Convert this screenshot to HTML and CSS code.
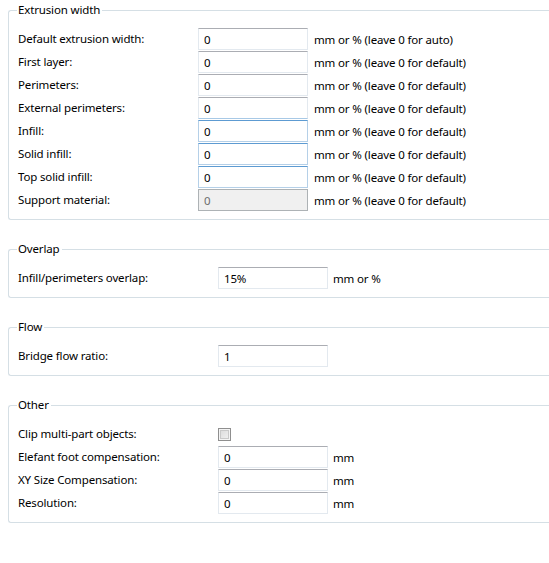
FILE: index.html
```html
<!DOCTYPE html>
<html>
<head>
<meta charset="utf-8">
<link rel="stylesheet" href="styles.css">
</head>
<body>
<div class="page">
  <fieldset class="group g1">
    <legend>Extrusion width</legend>
    <div class="row"><span class="label">Default extrusion width:</span><input class="field" value="0"><span class="unit">mm or % (leave 0 for auto)</span></div>
    <div class="row"><span class="label">First layer:</span><input class="field" value="0"><span class="unit">mm or % (leave 0 for default)</span></div>
    <div class="row"><span class="label">Perimeters:</span><input class="field" value="0"><span class="unit">mm or % (leave 0 for default)</span></div>
    <div class="row"><span class="label">External perimeters:</span><input class="field half" value="0"><span class="unit">mm or % (leave 0 for default)</span></div>
    <div class="row"><span class="label">Infill:</span><input class="field hot" value="0"><span class="unit">mm or % (leave 0 for default)</span></div>
    <div class="row"><span class="label">Solid infill:</span><input class="field hot" value="0"><span class="unit">mm or % (leave 0 for default)</span></div>
    <div class="row"><span class="label">Top solid infill:</span><input class="field hot" value="0"><span class="unit">mm or % (leave 0 for default)</span></div>
    <div class="row"><span class="label">Support material:</span><input class="field disabled" value="0" disabled><span class="unit">mm or % (leave 0 for default)</span></div>
  </fieldset>

  <fieldset class="group g2">
    <legend>Overlap</legend>
    <div class="row"><span class="label">Infill/perimeters overlap:</span><input class="field" value="15%"><span class="unit">mm or %</span></div>
  </fieldset>

  <fieldset class="group g2">
    <legend>Flow</legend>
    <div class="row"><span class="label">Bridge flow ratio:</span><input class="field" value="1"></div>
  </fieldset>

  <fieldset class="group g2">
    <legend>Other</legend>
    <div class="row"><span class="label">Clip multi-part objects:</span><span class="check"></span></div>
    <div class="row"><span class="label">Elefant foot compensation:</span><input class="field" value="0"><span class="unit">mm</span></div>
    <div class="row"><span class="label">XY Size Compensation:</span><input class="field" value="0"><span class="unit">mm</span></div>
    <div class="row"><span class="label">Resolution:</span><input class="field" value="0"><span class="unit">mm</span></div>
  </fieldset>
</div>
</body>
</html>
```

FILE: styles.css
```css
html, body {
  margin: 0;
  padding: 0;
  background: #ffffff;
  overflow: hidden;
}

body {
  font-family: "Noto Sans", "Open Sans", sans-serif;
  font-size: 11.5px;
  letter-spacing: -0.15px;
  color: #000000;
}

.page {
  display: flex;
  flex-direction: column;
  gap: 21px;
  padding: 2px 0 0 8px;
}

.group {
  margin: 0;
  padding: 10px 0 8px 9px;
  border: 1px solid #d5dfe5;
  border-right: 0;
  border-radius: 3px 0 0 3px;
  display: flex;
  flex-direction: column;
  gap: 1px;
  min-inline-size: 0;
}

.group legend {
  padding: 0 2px 0 1px;
  margin-left: -1px;
  line-height: 16px;
  height: 16px;
  color: #000;
}

.row {
  display: flex;
  align-items: center;
  height: 22px;
}

.label {
  flex: none;
  line-height: 16px;
}

.g1 .label { width: 180px; }
.g2 .label { width: 200px; }

.field {
  flex: none;
  box-sizing: border-box;
  width: 110px;
  height: 22px;
  margin: 0;
  padding: 0 0 0 5px;
  font: inherit;
  letter-spacing: inherit;
  color: #000;
  background: #fff;
  border: 1px solid #e3e9ef;
  border-top-color: #abadb3;
  border-radius: 0;
  outline: none;
}

.field.half {
  border-bottom-color: #a8c9e6;
}

.field.hot {
  border-color: #b5d0e8;
  border-top-color: #5d9bd2;
}

.field.disabled {
  background: #f0f0f0;
  border-color: #adb2b5;
  color: #6d6d6d;
}

.unit {
  margin-left: 5px;
  white-space: nowrap;
}

.g1 .unit { margin-left: 6px; }

.check {
  flex: none;
  box-sizing: border-box;
  width: 13px;
  height: 13px;
  border: 1px solid #8f8f8f;
  background: linear-gradient(135deg, #d8d8d8 0%, #f4f4f4 100%);
  box-shadow: inset 0 0 0 1px #f4f4f4, inset 0 0 0 2px #c9c9c9;
  margin-top: 1px;
}
```
